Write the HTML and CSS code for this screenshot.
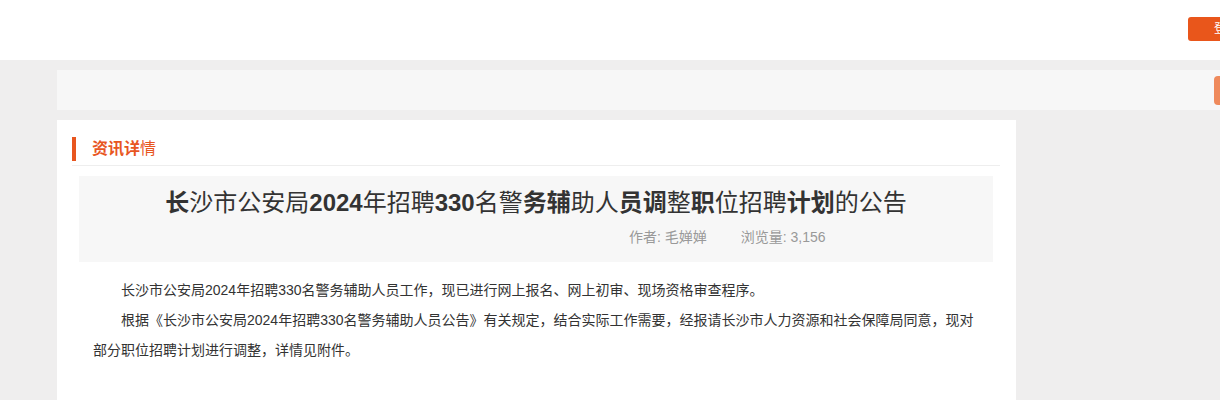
FILE: index.html
```html
<!DOCTYPE html>
<html lang="zh-CN">

<head>
    <meta charset="UTF-8">
    <meta name="viewport" content="width=device-width, initial-scale=1.0">
    <title>资讯详情</title>
    <link rel="stylesheet" href="styles.css">
</head>

<body>
<div class="page">
    <header class="top">
        <div class="container top-inner">
            <a href="#" class="login-btn">登录</a>
        </div>
    </header>

    <main class="main">
        <div class="container nav-bar">
            <span class="nav-tag"></span>
        </div>

        <div class="container content">
            <section class="card">
                <h2 class="card-title"><b>资讯详</b>情</h2>

                <div class="article-head">
                    <h1 class="article-title"><b>长</b>沙市公安局<b>2024</b>年招聘<b>330</b>名警<b>务辅</b>助人<b>员调</b>整<b>职</b>位招聘<b>计划</b>的公告</h1>
                    <div class="article-meta">
                        <span>作者: 毛婵婵</span>
                        <span>浏览量: 3,156</span>
                    </div>
                </div>

                <div class="article-body">
                    <p>长沙市公安局2024年招聘330名警务辅助人员工作，现已进行网上报名、网上初审、现场资格审查程序。</p>
                    <p>根据《长沙市公安局2024年招聘330名警务辅助人员公告》有关规定，结合实际工作需要，经报请长沙市人力资源和社会保障局同意，现对部分职位招聘计划进行调整，详情见附件。</p>
                </div>
            </section>
        </div>
    </main>
</div>
</body>

</html>
```

FILE: styles.css
```css
html, body {
    margin: 0;
    height: 100%;
    overflow: hidden;
}

body {
    font-family: "Liberation Sans", "Noto Sans CJK SC", sans-serif;
    color: #333;
    background-color: #efeeee;
}

.page {
    width: 1314px;
}

.container {
    width: 1200px;
    margin: 0 57px;
    box-sizing: border-box;
}

/* header */
.top {
    height: 60px;
    background-color: #fff;
}

.top-inner {
    display: flex;
    padding: 17px 0 0 1131px;
}

.login-btn {
    display: block;
    height: 24px;
    padding: 0 22px 0 26px;
    line-height: 24px;
    border-radius: 3px;
    background-color: #e9561b;
    color: #fff;
    font-size: 12px;
    text-decoration: none;
}

/* grey nav strip */
.main {
    padding-top: 10px;
}

.nav-bar {
    display: flex;
    justify-content: flex-end;
    align-items: center;
    height: 40px;
    padding-right: 7px;
    background-color: #f7f7f7;
}

.nav-tag {
    width: 36px;
    height: 29px;
    border-radius: 4px;
    background-color: #ef8a5c;
}

/* article card */
.content {
    display: flex;
    margin-top: 10px;
}

.card {
    width: 959px;
    min-height: 300px;
    padding: 17px 16px 0 15px;
    box-sizing: border-box;
    background-color: #fff;
}

.card-title {
    margin: 0;
    padding-bottom: 4px;
    border-bottom: 1px solid #eee;
    font-size: 16px;
    font-weight: normal;
    line-height: 24px;
    color: #e8561f;
    display: flex;
}

.card-title b {
    border-left: 4px solid #e8561f;
    padding-left: 16px;
}

.article-head {
    margin: 10px 7px 0 7px;
    padding: 10px 0 15px;
    background-color: #f7f7f7;
}

.article-title {
    margin: 0;
    font-size: 24px;
    font-weight: normal;
    line-height: 34px;
    text-align: center;
    color: #333;
}

.article-meta {
    display: flex;
    gap: 34px;
    margin: 7px 0 0 550px;
    font-size: 14px;
    line-height: 20px;
    color: #999;
}

.article-body {
    padding: 13px 20px 30px 21px;
    font-size: 14px;
    line-height: 30px;
    color: #333;
}

.article-body p {
    margin: 0;
    text-indent: 2em;
}
```
